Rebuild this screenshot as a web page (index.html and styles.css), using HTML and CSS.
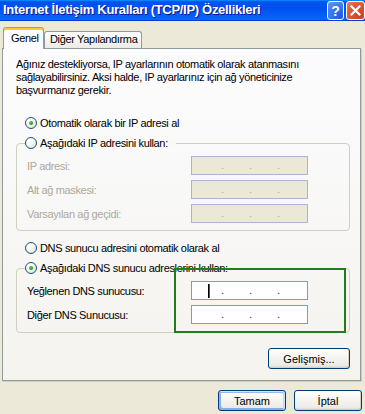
FILE: index.html
```html
<!DOCTYPE html>
<html lang="tr">
<head>
<meta charset="utf-8">
<link rel="stylesheet" href="styles.css">
</head>
<body>
<div class="window">
  <div class="titlebar">
    <span class="title">Internet İletişim Kuralları (TCP/IP) Özellikleri</span>
    <span class="tbtn help">?</span>
    <span class="tbtn close"><svg width="11" height="11" viewBox="0 0 11 11"><path d="M1.5 1.5 L9.5 9.5 M9.5 1.5 L1.5 9.5" stroke="#fff" stroke-width="2.2" stroke-linecap="square"/></svg></span>
  </div>
  <div class="client">
    <div class="tabs">
      <div class="tab active">Genel</div>
      <div class="tab">Diğer Yapılandırma</div>
    </div>
    <div class="panel">
      <p class="intro">Ağınız destekliyorsa, IP ayarlarının otomatik olarak atanmasını<br>sağlayabilirsiniz. Aksi halde, IP ayarlarınız için ağ yöneticinize<br>başvurmanız gerekir.</p>
      <div class="radio-row first"><span class="radio checked"></span><span>Otomatik olarak bir IP adresi al</span></div>
      <fieldset class="group g1">
        <legend class="radio-row"><span class="radio"></span><span>Aşağıdaki IP adresini kullan:</span></legend>
        <div class="field disabled"><span class="lbl">IP adresi:</span><span class="ip"><span class="seg s1"></span><span class="dot">.</span><span class="seg"></span><span class="dot">.</span><span class="seg"></span><span class="dot">.</span></span></div>
        <div class="field disabled"><span class="lbl">Alt ağ maskesi:</span><span class="ip"><span class="seg s1"></span><span class="dot">.</span><span class="seg"></span><span class="dot">.</span><span class="seg"></span><span class="dot">.</span></span></div>
        <div class="field disabled"><span class="lbl">Varsayılan ağ geçidi:</span><span class="ip"><span class="seg s1"></span><span class="dot">.</span><span class="seg"></span><span class="dot">.</span><span class="seg"></span><span class="dot">.</span></span></div>
      </fieldset>
      <div class="radio-row r3"><span class="radio"></span><span>DNS sunucu adresini otomatik olarak al</span></div>
      <fieldset class="group g2">
        <legend class="radio-row"><span class="radio checked"></span><span>Aşağıdaki DNS sunucu adreslerini kullan:</span></legend>
        <div class="field"><span class="lbl">Yeğlenen DNS sunucusu:</span><span class="ip"><span class="seg s1"><span class="caret"></span></span><span class="dot">.</span><span class="seg"></span><span class="dot">.</span><span class="seg"></span><span class="dot">.</span></span></div>
        <div class="field f2"><span class="lbl">Diğer DNS Sunucusu:</span><span class="ip"><span class="seg s1"></span><span class="dot">.</span><span class="seg"></span><span class="dot">.</span><span class="seg"></span><span class="dot">.</span></span></div>
      </fieldset>
      <div class="adv-row"><span class="btn adv">Gelişmiş...</span></div>
    </div>
    <div class="footer"><span class="btn default">Tamam</span><span class="btn">İptal</span></div>
  </div>
</div>
<div class="highlight"></div>
</body>
</html>
```

FILE: styles.css
```css
html, body {
  margin: 0;
  padding: 0;
}
body {
  width: 365px;
  height: 414px;
  overflow: hidden;
  background: #ECE9D8;
  font-family: "Liberation Sans", Arial, sans-serif;
  font-size: 11px;
  letter-spacing: -0.35px;
  color: #000;
  position: relative;
}
.window {
  width: 367px;
  height: 414px;
}
.titlebar {
  height: 21px;
  display: flex;
  align-items: flex-start;
  padding-right: 2px;
  background: linear-gradient(180deg, #0997ff, #0053ee 8%, #0050ee 40%, #0066ff 88%, #0066ff 93%, #005bff 95%, #003dd7 96%, #003dd7);
}
.title {
  flex: 1;
  padding-left: 3px;
  line-height: 19px;
  font-weight: bold;
  font-size: 13px;
  letter-spacing: -0.3px;
  color: #fff;
  text-shadow: 1px 1px 0 #0f1089;
  white-space: nowrap;
}
.tbtn {
  box-sizing: border-box;
  height: 19px;
  margin-top: 1px;
  border: 1px solid #fff;
  border-radius: 3px;
  display: flex;
  align-items: center;
  justify-content: center;
  color: #fff;
  font-weight: bold;
  font-size: 14px;
  letter-spacing: 0;
}
.help {
  width: 17px;
  background: radial-gradient(circle at 80% 85%, #1d5ae3 0%, #3d7cf5 60%, #6a9cf7 100%);
}
.close {
  width: 19px;
  margin-left: 2px;
  background: radial-gradient(circle at 80% 85%, #c7441f 0%, #e0583a 60%, #ed8064 100%);
}
.client {
  padding-top: 6px;
}
.tabs {
  display: flex;
  align-items: flex-end;
  height: 21px;
  margin-left: 3px;
  position: relative;
  z-index: 1;
}
.tab {
  box-sizing: border-box;
  height: 17px;
  padding: 0 4px 0 5px;
  line-height: 15px;
  border: 1px solid #919b9c;
  border-bottom: none;
  border-radius: 3px 3px 0 0;
  background: linear-gradient(180deg, #fff, #ecebe6);
  white-space: nowrap;
}
.tab.active {
  width: 41px;
  height: 22px;
  line-height: 19px;
  padding: 1px 0 0 7px;
  margin-bottom: -1px;
  border-top: 1px solid #e68b2c;
  box-shadow: inset 0 2px 0 #ffc73c;
  background: #fcfcfe;
}
.panel {
  box-sizing: border-box;
  width: 359px;
  height: 333px;
  margin-left: 2px;
  border: 1px solid #919b9c;
  box-shadow: 1px 1px 0 #d0cebf;
  background: linear-gradient(180deg, #fcfcfe, #f4f3ee);
  padding: 9px 10px 0 13px;
}
.intro {
  margin: 0;
  line-height: 13px;
  white-space: nowrap;
}
.radio-row {
  display: flex;
  align-items: center;
  gap: 3px;
  height: 14px;
  line-height: 14px;
  white-space: nowrap;
}
.radio-row.first {
  margin-top: 19px;
  padding-left: 9px;
}
.radio-row.r3 {
  margin-top: 10px;
  padding-left: 9px;
}
.radio {
  box-sizing: border-box;
  width: 12px;
  height: 12px;
  flex: none;
  border: 1px solid #1c5180;
  border-radius: 50%;
  background: radial-gradient(circle at 35% 30%, #fff 20%, #e6e5dd 75%, #d4d1c6 100%);
  display: flex;
  align-items: center;
  justify-content: center;
}
.radio.checked::after {
  content: "";
  width: 4px;
  height: 4px;
  border-radius: 50%;
  background: radial-gradient(circle at 35% 35%, #5bd35b, #21a121 60%, #188018);
}
.group {
  margin: 6px 0 0 0;
  padding: 0 0 7px 0;
  border: 1px solid #d0d0bf;
  border-radius: 4px;
  min-width: 0;
}
.group legend {
  margin-left: 8px;
  padding: 0 8px 0 0;
}
.group.g2 {
  padding-bottom: 8px;
}
.field {
  display: flex;
  align-items: center;
  height: 19px;
  margin-top: 5px;
  padding-left: 10px;
}
.group > legend + .field {
  margin-top: 6px;
}
.lbl {
  width: 164px;
  flex: none;
  white-space: nowrap;
}
.ip {
  box-sizing: border-box;
  width: 117px;
  height: 19px;
  display: flex;
  align-items: center;
  border: 1px solid #7f9db9;
  background: #fff;
  line-height: 17px;
  color: #333;
}
.field.disabled .lbl {
  color: #aca899;
}
.field.disabled .ip {
  background: #ebe8d7;
  border-color: #a5b7cd;
  color: #aca899;
}
.seg {
  width: 23px;
  height: 17px;
  display: flex;
  align-items: center;
}
.seg.s1 {
  width: 28px;
  padding-left: 16px;
  box-sizing: border-box;
}
.dot {
  width: 5px;
  text-align: center;
  letter-spacing: 0;
}
.caret {
  width: 1px;
  height: 14px;
  background: #000;
  box-shadow: 1px 0 0 #555;
}
.adv-row {
  display: flex;
  justify-content: flex-end;
  margin-top: 15px;
}
.btn {
  box-sizing: border-box;
  display: flex;
  align-items: center;
  justify-content: center;
  width: 68px;
  height: 21px;
  border: 1px solid #003c74;
  border-radius: 3px;
  background: linear-gradient(180deg, #fff, #ecebe6 86%, #d6d0c5);
  box-shadow: inset -1px -1px 0 #d6d0c5;
  letter-spacing: 0;
}
.btn.adv {
  width: 82px;
}
.btn.default {
  box-shadow: inset -1px 1px #cee7ff, inset 1px 2px #98b8ea, inset -2px 2px #bcd4f6, inset 1px -1px #89ade4, inset 2px -2px #89ade4;
}
.footer {
  display: flex;
  justify-content: flex-end;
  gap: 8px;
  margin-top: 9px;
  padding-right: 5px;
}
.highlight {
  position: absolute;
  left: 174px;
  top: 268px;
  width: 172px;
  height: 65px;
  box-sizing: border-box;
  border: 2px solid #1e7e1e;
}
```
